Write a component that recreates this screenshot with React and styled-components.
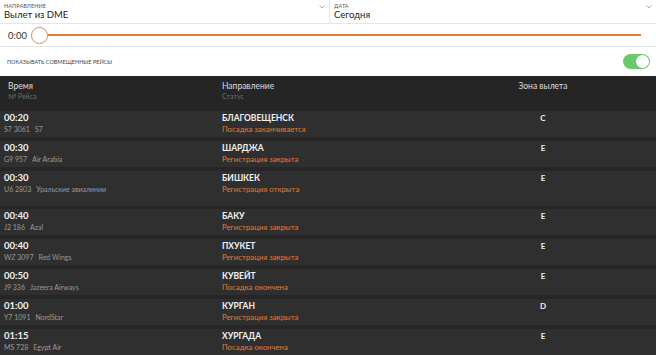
import React from 'react'
import styled, { createGlobalStyle } from 'styled-components'

const GlobalStyle = createGlobalStyle`
  html, body {
    margin: 0;
    padding: 0;
    background: #262626;
  }
  body {
    font-family: Lato, 'Noto Sans', sans-serif;
    -webkit-font-smoothing: antialiased;
  }
`

const flights = [
  { time: '00:20', num: 'S7 3061', airline: 'S7', city: 'БЛАГОВЕЩЕНСК', status: 'Посадка заканчивается', zone: 'C' },
  { time: '00:30', num: 'G9 957', airline: 'Air Arabia', city: 'ШАРДЖА', status: 'Регистрация закрыта', zone: 'E' },
  { time: '00:30', num: 'U6 2803', airline: 'Уральские авиалинии', city: 'БИШКЕК', status: 'Регистрация открыта', zone: 'E', tall: true },
  { time: '00:40', num: 'J2 186', airline: 'Azal', city: 'БАКУ', status: 'Регистрация закрыта', zone: 'E' },
  { time: '00:40', num: 'WZ 3097', airline: 'Red Wings', city: 'ПХУКЕТ', status: 'Регистрация закрыта', zone: 'E' },
  { time: '00:50', num: 'J9 336', airline: 'Jazeera Airways', city: 'КУВЕЙТ', status: 'Посадка окончена', zone: 'E' },
  { time: '01:00', num: 'Y7 1091', airline: 'NordStar', city: 'КУРГАН', status: 'Регистрация закрыта', zone: 'D' },
  { time: '01:15', num: 'MS 728', airline: 'Egypt Air', city: 'ХУРГАДА', status: 'Посадка окончена', zone: 'E' },
]

const Page = styled.div`
  width: 656px;
  height: 355px;
  overflow: hidden;
  background: #262626;
`

const Filters = styled.div`
  display: grid;
  grid-template-columns: 329px 1fr;
  background: #fff;
  border-bottom: 1px solid #e6e6e6;
`

const Select = styled.div`
  position: relative;
  height: 23px;
  padding: 3px 4px 0;
  box-sizing: border-box;
  border-left: ${p => (p.divided ? '1px solid #e6e6e6' : 'none')};
`

const SelectLabel = styled.div`
  font-size: 5.5px;
  line-height: 6px;
  color: #555;
  text-transform: uppercase;
  letter-spacing: 0.1px;
`

const SelectValue = styled.div`
  font-size: 9.5px;
  line-height: 12px;
  color: #222;
`

const Chevron = styled.svg`
  position: absolute;
  right: 4px;
  top: 5px;
  width: 6px;
  height: 4px;
`

const SliderRow = styled.div`
  display: flex;
  align-items: center;
  height: 22px;
  padding: 0 15px 0 8px;
  background: #fff;
  border-bottom: 1px solid #e6e6e6;
`

const SliderValue = styled.span`
  font-size: 9.5px;
  color: #333;
  margin-right: 4px;
`

const Thumb = styled.div`
  width: 15px;
  height: 15px;
  border-radius: 50%;
  border: 1px solid #dd8a4a;
  background: #fff;
  flex: none;
`

const Track = styled.div`
  flex: 1;
  height: 2px;
  background: #e07b39;
`

const ToggleRow = styled.div`
  display: flex;
  align-items: center;
  justify-content: space-between;
  height: 29px;
  padding: 0 6px 0 7px;
  background: #fff;
`

const ToggleLabel = styled.span`
  font-size: 5.5px;
  color: #444;
  text-transform: uppercase;
`

const Toggle = styled.div`
  position: relative;
  width: 27px;
  height: 15px;
  border-radius: 8px;
  background: #6cc96a;
`

const Knob = styled.div`
  position: absolute;
  right: 1px;
  top: 1px;
  width: 13px;
  height: 13px;
  border-radius: 50%;
  background: #fff;
`

const Table = styled.div`
  background: #262626;
`

const Grid = styled.div`
  display: grid;
  grid-template-columns: 218px 261px 120px 1fr;
`

const HeadRow = styled(Grid)`
  height: 35px;
  padding: 5px 0 0 4px;
  box-sizing: border-box;
  background: #252525;
`

const HeadCell = styled.div`
  padding-left: ${p => (p.first ? '4px' : '0')};
  text-align: ${p => (p.center ? 'center' : 'left')};
`

const HeadTitle = styled.div`
  font-size: 8.5px;
  line-height: 11px;
  color: #ddd;
`

const HeadSub = styled.div`
  font-size: 7px;
  line-height: 9px;
  color: #6e6e6e;
`

const Row = styled(Grid)`
  height: ${p => (p.tall ? '35px' : '26px')};
  margin-bottom: ${p => (p.tall ? '3px' : '4px')};
  padding: 1px 0 0 4px;
  box-sizing: border-box;
  background: #2f2f2f;
`

const Time = styled.div`
  font-size: 9.5px;
  line-height: 12px;
  font-weight: 700;
  color: #f2f2f2;
`

const FlightNum = styled.div`
  display: flex;
  gap: 5px;
  font-size: 7px;
  line-height: 10px;
  color: #9a9a9a;
`

const City = styled.div`
  font-size: 8.5px;
  line-height: 12px;
  font-weight: 700;
  color: #f2f2f2;
`

const Status = styled.div`
  font-size: 7.8px;
  line-height: 10px;
  color: #e07b39;
`

const Zone = styled.div`
  font-size: 8px;
  line-height: 12px;
  font-weight: 700;
  color: #f2f2f2;
  text-align: center;
`

const ChevronIcon = () => (
  <Chevron viewBox="0 0 6 4">
    <path d="M0.5 0.5 L3 3 L5.5 0.5" fill="none" stroke="#999" strokeWidth="0.8" />
  </Chevron>
)

export default function App () {
  return (
    <Page>
      <GlobalStyle />
      <Filters>
        <Select>
          <SelectLabel>Направление</SelectLabel>
          <SelectValue>Вылет из DME</SelectValue>
          <ChevronIcon />
        </Select>
        <Select divided>
          <SelectLabel>Дата</SelectLabel>
          <SelectValue>Сегодня</SelectValue>
          <ChevronIcon />
        </Select>
      </Filters>
      <SliderRow>
        <SliderValue>0:00</SliderValue>
        <Thumb />
        <Track />
      </SliderRow>
      <ToggleRow>
        <ToggleLabel>Показывать совмещенные рейсы</ToggleLabel>
        <Toggle>
          <Knob />
        </Toggle>
      </ToggleRow>
      <Table>
        <HeadRow>
          <HeadCell first>
            <HeadTitle>Время</HeadTitle>
            <HeadSub>№ Рейса</HeadSub>
          </HeadCell>
          <HeadCell>
            <HeadTitle>Направление</HeadTitle>
            <HeadSub>Статус</HeadSub>
          </HeadCell>
          <HeadCell center>
            <HeadTitle>Зона вылета</HeadTitle>
          </HeadCell>
          <div />
        </HeadRow>
        {flights.map((f, i) => (
          <Row key={i} tall={f.tall}>
            <div>
              <Time>{f.time}</Time>
              <FlightNum>
                <span>{f.num}</span>
                <span>{f.airline}</span>
              </FlightNum>
            </div>
            <div>
              <City>{f.city}</City>
              <Status>{f.status}</Status>
            </div>
            <Zone>{f.zone}</Zone>
            <div />
          </Row>
        ))}
      </Table>
    </Page>
  )
}
